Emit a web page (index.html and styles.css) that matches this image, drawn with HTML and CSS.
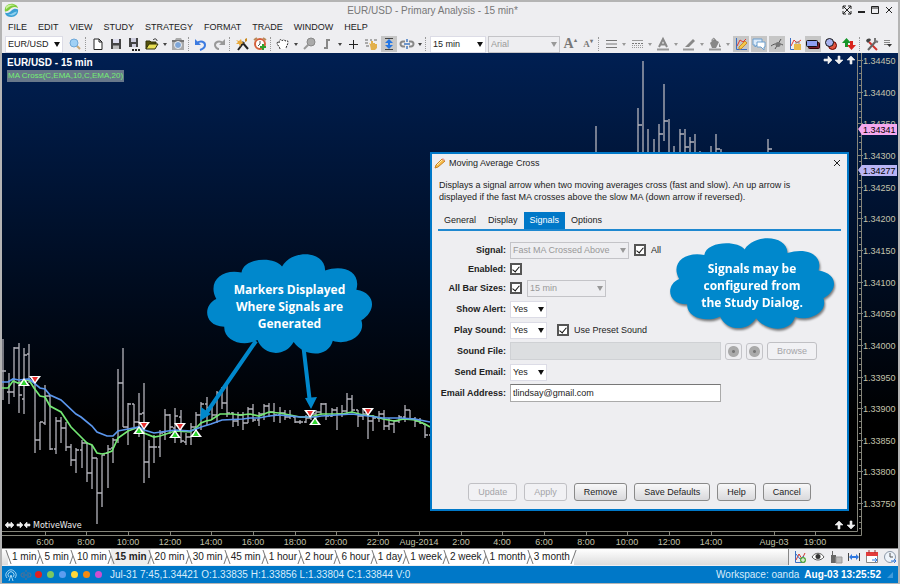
FILE: index.html
```html
<!DOCTYPE html>
<html lang="en">

<head>
    <meta charset="UTF-8">
    <meta name="viewport" content="width=device-width, initial-scale=1.0">
    <title>EUR/USD - Primary Analysis - 15 min*</title>
    <link rel="stylesheet" href="styles.css">
</head>

<body>
    <div class="window">
        <header class="titlebar">
            <svg class="logo" viewBox="0 0 16 16">
                <path d="M1 9C0 3 5 0 10 1c3 .6 4.500 2.500 5 4.500C11 3 8 5 6 7 4.500 8.500 2.500 9.500 1 9z" fill="#7ccb3a" />
                <path d="M2 4C5 1 9 1 12 3 8 2 5 4 2 7z" fill="#c9f09a" />
                <path d="M1 10c3 1.500 5 0 7-2s4.500-2.500 7-1c.5 5-3 8-7 8-4 0-6.500-2-7-5z" fill="#3ba0d4" />
                <path d="M4 12c4 1 6-3 10-3-2 4-6 5.500-10 3z" fill="#8fd0ee" />
            </svg>
            <h1>EUR/USD - Primary Analysis - 15 min*</h1>
            <div class="window-buttons">
                <button type="button" aria-label="Full screen"><svg viewBox="0 0 10 10"><path d="M1 4V1h3M6 1h3v3M9 6v3H6M4 9H1V6M1 1l8 8M9 1L1 9" /></svg></button>
                <button type="button" aria-label="Minimize"><svg viewBox="0 0 10 10"><path d="M2 7h7" stroke-width="2" /></svg></button>
                <button type="button" aria-label="Maximize"><svg viewBox="0 0 10 10"><path d="M1.500 1.500h7v7h-7zM2 3h6" /></svg></button>
                <button type="button" aria-label="Close"><svg viewBox="0 0 10 10"><path d="M2 2l6 6M8 2L2 8" /></svg></button>
            </div>
        </header>

        <nav class="menu">
            <a href="#">FILE</a>
            <a href="#">EDIT</a>
            <a href="#">VIEW</a>
            <a href="#">STUDY</a>
            <a href="#">STRATEGY</a>
            <a href="#">FORMAT</a>
            <a href="#">TRADE</a>
            <a href="#">WINDOW</a>
            <a href="#">HELP</a>
        </nav>

        <div class="toolbar">
            <span class="select symbol"><select aria-label="Symbol"><option>EUR/USD</option></select></span>
            <button type="button" aria-label="Find"><svg viewBox="0 0 16 16"><path d="M9 9l4 4" stroke="#c9a877" stroke-width="2" /><circle cx="7" cy="7" r="4" fill="#9fd0f5" stroke="#6fa8d8" /></svg></button>
            <span class="sep"></span>
            <button type="button" aria-label="New"><svg viewBox="0 0 16 16"><path d="M4 3h5l3 3v7.500H4z M9 3v3h3" fill="#fff" stroke="#222" /></svg></button>
            <button type="button" aria-label="Save"><svg viewBox="0 0 16 16"><path d="M3 3h10v10H3z" fill="#444" /><path d="M5 3h6v4H5z" fill="#dde" /><path d="M5 9.500h6V13H5z" fill="#bbb" /></svg></button>
            <button type="button" aria-label="Save as"><svg viewBox="0 0 16 16"><path d="M3 2h9v9H3z" fill="#444" /><path d="M5 2h5v4H5zM6 8h4v3H6z" fill="#ccd" /><path d="M6 13h2v2H6zM9 13h2v2H9zM12 13h2v2h-2z" fill="#222" /></svg></button>
            <button type="button" aria-label="Open"><svg viewBox="0 0 16 16"><path d="M2 13V5h4l1 1h5v2" fill="#55520c" stroke="#33330a" /><path d="M2 13l3-5h9l-3 5z" fill="#e8df55" stroke="#33330a" /><path d="M9 4c2-2 4-1 4 1" fill="none" stroke="#222" /></svg></button>
            <button type="button" class="caret" aria-label="Recent files"></button>
            <button type="button" aria-label="Snapshot"><svg viewBox="0 0 16 16"><path d="M2 4h3l1-2h5l1 2h2v10H2z" fill="#a9a9a9" /><path d="M2 4h12v2H2z" fill="#777" /><circle cx="8" cy="9" r="3.500" fill="#7ea6d8" stroke="#eee" /></svg></button>
            <span class="sep"></span>
            <button type="button" aria-label="Undo"><svg viewBox="0 0 16 16"><path d="M4 7c4-3 8-1 8 2 0 2-2 4-5 5" fill="none" stroke="#3c7be0" stroke-width="2" /><path d="M2 3v6h6z" fill="#3c7be0" /></svg></button>
            <button type="button" aria-label="Redo"><svg viewBox="0 0 16 16"><path d="M12 7C8 4 4 6 4 9c0 2 2 4 4 4" fill="none" stroke="#999" stroke-width="2" /><path d="M14 3v6H8z" fill="#999" /></svg></button>
            <span class="sep"></span>
            <button type="button" aria-label="Study wizard"><svg viewBox="0 0 16 16"><path d="M4 14l6-8M8 6l6 7" stroke="#222" stroke-width="2" /><path d="M2 4l3 1 2-2 1 3 2 1-3 1-1 3-1-3-3 0 2-2z" fill="#e8a93c" /><path d="M11 3l2-1v3l-2 1z" fill="#c98a20" /></svg></button>
            <button type="button" aria-label="Alerts"><svg viewBox="0 0 16 16"><circle cx="8" cy="8" r="5" fill="#fff" stroke="#d5603c" stroke-width="2" /><path d="M2 4l3-2M14 4l-3-2" stroke="#b98b5a" stroke-width="2" /><path d="M8 5v3l-2 2" fill="none" stroke="#555" /><path d="M11 8v6M8 11h6" stroke="#2ea12e" stroke-width="2" /></svg></button>
            <span class="sep"></span>
            <button type="button" aria-label="Pan"><svg viewBox="0 0 16 16"><path d="M5 13c0-2-3-4-3-6 0-1 2-1 2 0 0-4 2-4 3-2 1-2 3-1 3 0 2-1 3 0 3 1 0 3-2 4-2 7" fill="#fff" stroke="#222" stroke-dasharray="2 1" /></svg></button>
            <button type="button" class="caret" aria-label="Pan options"></button>
            <button type="button" aria-label="Zoom"><svg viewBox="0 0 16 16"><circle cx="10" cy="6" r="4" fill="#aaa" stroke="#888" /><path d="M7 9l-4 4" stroke="#999" stroke-width="2" /></svg></button>
            <button type="button" aria-label="Bar style"><svg viewBox="0 0 16 16"><path d="M8 3v10M8 4h3M5 12h3" stroke="#888" stroke-width="2" /></svg></button>
            <button type="button" class="caret" aria-label="Bar styles"></button>
            <button type="button" aria-label="Crosshair"><svg viewBox="0 0 16 16"><path d="M8.500 4v9M4 8.500h9" stroke="#222" /></svg></button>
            <button type="button" aria-label="Lock"><svg viewBox="0 0 16 16"><path d="M2 4h3M7 4h2M11 4h3M2 7h3M3 10h3" stroke="#aaa" stroke-width="2" /><path d="M7 9l-1-2 2 1V5h2v2h2v1h2v4l-2 2H8z" fill="#e2b04c" /></svg></button>
            <button type="button" class="on" aria-label="Fit vertical"><svg viewBox="0 0 16 16"><path d="M4 2.500h8M4 13.500h8" stroke="#444" /><path d="M8 3l4 4H9v2h3l-4 4-4-4h3V7H4z" fill="#2376e5" /></svg></button>
            <button type="button" aria-label="Link"><svg viewBox="0 0 16 16"><path d="M6 5.500H4a2.500 2.500 0 0 0 0 5h2M10 5.500h2a2.500 2.500 0 0 1 0 5h-2" fill="none" stroke="#888" stroke-width="2" /><path d="M5 8h6M8 3v3M8 10v3" stroke="#6d96cc" stroke-width="2" /></svg></button>
            <button type="button" class="caret" aria-label="Link options"></button>
            <span class="sep"></span>
            <span class="select barsize"><select aria-label="Bar size"><option>15 min</option></select></span>
            <span class="select font"><select aria-label="Font" disabled><option>Arial</option></select></span>
            <button type="button" aria-label="Larger text" class="letter large">A<sup>&#9652;</sup></button>
            <button type="button" aria-label="Smaller text" class="letter small">A<sup>&#9662;</sup></button>
            <span class="sep"></span>
            <button type="button" aria-label="Line width"><svg viewBox="0 0 16 16"><path d="M3 4.500h11M3 8h11M3 11.500h11" stroke="#777" /></svg></button>
            <button type="button" class="caret pale" aria-label="Line widths"></button>
            <button type="button" aria-label="Line style"><svg viewBox="0 0 16 16"><path d="M3 4.500h11" stroke="#999" /><path d="M3 7.500h11" stroke="#777" stroke-dasharray="2 1" /><path d="M3 9.500h11M3 11.500h11" stroke="#999" stroke-dasharray="1 1" /></svg></button>
            <button type="button" class="caret pale" aria-label="Line styles"></button>
            <button type="button" aria-label="Text color"><svg viewBox="0 0 16 16"><path d="M4 11l4-8 4 8M6 8.500h4" fill="none" stroke="#888" stroke-width="2" /><path d="M2 13.500h12" stroke="#999" stroke-width="2" /></svg></button>
            <button type="button" class="caret pale" aria-label="Text colors"></button>
            <button type="button" aria-label="Line color"><svg viewBox="0 0 16 16"><path d="M5 10l7-7 2 2-6 6H4z" fill="#888" /><path d="M2 13.500h11" stroke="#999" stroke-width="2" /></svg></button>
            <button type="button" class="caret pale" aria-label="Line colors"></button>
            <button type="button" aria-label="Fill color"><svg viewBox="0 0 16 16"><path d="M3 7l4-4 5 3-3 6H5zM12 7l2 4h-2z" fill="#888" /><path d="M5 5c0-4 4-3 3 0" fill="none" stroke="#777" /><path d="M2 13.500h12" stroke="#999" stroke-width="2" /></svg></button>
            <button type="button" class="caret pale" aria-label="Fill colors"></button>
            <button type="button" class="on" aria-label="Draw on chart"><svg viewBox="0 0 16 16"><path d="M3.500 2v11.500H14" fill="none" stroke="#3a6fc4" /><path d="M4 10l3-6 3 2 3-3" fill="none" stroke="#e23c32" /><path d="M6 11l6-6 2 2-6 6H6z" fill="#f4c84a" stroke="#c98d2d" /></svg></button>
            <button type="button" class="on" aria-label="Comments"><svg viewBox="0 0 16 16"><path d="M2 3h9v6H6l-2 2V9H2z" fill="#dcebfa" stroke="#6d9fce" /><path d="M6 6h8v5h-1v3l-3-3H6z" fill="#fff" stroke="#6d9fce" /></svg></button>
            <button type="button" class="on" aria-label="Hide studies"><svg viewBox="0 0 16 16"><path d="M2 10c4-3 8-3 12-1M6 13l6-10" fill="none" stroke="#555" /><circle cx="9" cy="8.500" r="2.500" fill="#777" /></svg></button>
            <button type="button" aria-label="Lock chart"><svg viewBox="0 0 16 16"><path d="M3.500 2v11.500H14" fill="none" stroke="#3a6fc4" /><path d="M4 10l3-6 3 3 4-3" fill="none" stroke="#e23c32" /><path d="M7 8h7v6H7z" fill="#e8b94a" /><path d="M9 8V6h3v2" fill="none" stroke="#888" /></svg></button>
            <button type="button" class="on" aria-label="Rectangle"><svg viewBox="0 0 16 16"><rect x="3.500" y="6.500" width="11" height="6" rx="1" fill="#7a1e2c" stroke="#300" /><rect x="1.500" y="4.500" width="11" height="6" rx="1" fill="#8d9ff0" stroke="#111" /></svg></button>
            <button type="button" aria-label="Ellipse"><svg viewBox="0 0 16 16"><circle cx="9.500" cy="9.500" r="4" fill="#e0533f" stroke="#600" /><circle cx="6.500" cy="6.500" r="4" fill="#a9b4f0" stroke="#111" /></svg></button>
            <button type="button" aria-label="Buy and sell"><svg viewBox="0 0 16 16"><path d="M5.500 2L10 7H7v4H4V7H1z" fill="#15962a" /><path d="M10.500 14L6 9h3V5h3v4h3z" fill="#d8231c" /></svg></button>
            <span class="sep"></span>
            <button type="button" aria-label="Preferences"><svg viewBox="0 0 16 16"><path d="M5 6l8 8" stroke="#d0342c" stroke-width="2" /><path d="M12 5l-8 9" stroke="#666" stroke-width="2" /><path d="M2 5c1-3 4-3 5-1L4 7z" fill="#444" /><path d="M11 2v3l3 1" fill="none" stroke="#777" stroke-width="2" /></svg></button>
            <button type="button" aria-label="More"><svg viewBox="0 0 16 16"><path d="M2 4.500h6M2 6.500h6M2 8.500h4" stroke="#888" /><path d="M5 8h5l-2.500 3z" fill="#333" /></svg></button>
        </div>

        <main class="chart">
            <svg class="plot" id="plot"></svg>

            <div class="chart-title">
                <h2>EUR/USD - 15 min</h2>
                <span class="study">MA Cross(C,EMA,10,C,EMA,20)</span>
            </div>

            <section class="dialog" role="dialog" aria-labelledby="dialog-title">
                <div class="dialog-head">
                    <svg viewBox="0 0 12 12"><path d="M1 11l1-3 6-6 3 2-7 6z" fill="#f6bd4c" stroke="#c98021" /><path d="M8 2l1-1 2 2-1 1z" fill="#e9a0a0" /><path d="M3 8l5-5" stroke="#fff0b8" /></svg>
                    <h2 id="dialog-title">Moving Average Cross</h2>
                    <button type="button" class="close" aria-label="Close"><svg viewBox="0 0 10 10"><path d="M2 2l6 6M8 2L2 8" /></svg></button>
                </div>
                <p class="description">Displays a signal arrow when two moving averages cross (fast and slow). An up arrow is displayed if the fast MA crosses above the slow MA (down arrow if reversed).</p>
                <div class="dialog-tabs">
                    <a href="#">General</a>
                    <a href="#">Display</a>
                    <a href="#" class="active">Signals</a>
                    <a href="#">Options</a>
                </div>
                <form class="signal-form">
                    <label for="signal">Signal:</label>
                    <div class="field">
                        <span class="select wide"><select id="signal" disabled><option>Fast MA Crossed Above</option></select></span>
                        <input type="checkbox" id="all" checked>
                        <label for="all">All</label>
                    </div>
                    <label for="enabled">Enabled:</label>
                    <div class="field"><input type="checkbox" id="enabled" checked></div>
                    <label for="sizes">All Bar Sizes:</label>
                    <div class="field">
                        <input type="checkbox" id="sizes" checked>
                        <span class="select medium"><select aria-label="Bar size" disabled><option>15 min</option></select></span>
                    </div>
                    <label for="alert">Show Alert:</label>
                    <div class="field"><span class="select yes"><select id="alert"><option>Yes</option><option>No</option></select></span></div>
                    <label for="sound">Play Sound:</label>
                    <div class="field">
                        <span class="select yes"><select id="sound"><option>Yes</option><option>No</option></select></span>
                        <input type="checkbox" id="preset" class="preset" checked>
                        <label for="preset">Use Preset Sound</label>
                    </div>
                    <label for="file">Sound File:</label>
                    <div class="field file">
                        <input type="text" id="file" disabled>
                        <button type="button" class="round" aria-label="Play" disabled></button>
                        <button type="button" class="round" aria-label="Stop" disabled></button>
                        <button type="button" class="btn" disabled>Browse</button>
                    </div>
                    <label for="send">Send Email:</label>
                    <div class="field"><span class="select yes"><select id="send"><option>Yes</option><option>No</option></select></span></div>
                    <label for="email">Email Address:</label>
                    <div class="field"><input type="text" id="email" value="tlindsay@gmail.com"></div>
                </form>
                <div class="dialog-buttons">
                    <button type="button" class="btn" disabled>Update</button>
                    <button type="button" class="btn" disabled>Apply</button>
                    <button type="button" class="btn">Remove</button>
                    <button type="button" class="btn">Save Defaults</button>
                    <button type="button" class="btn">Help</button>
                    <button type="button" class="btn">Cancel</button>
                </div>
            </section>

            <!-- callouts -->
            <div class="callout markers">
                <svg viewBox="20 42 497 305" preserveAspectRatio="none"><path d="M124 98C130 52 225 48 246 80C275 28 375 30 376 92C430 72 485 95 470 150C530 160 530 215 485 242C500 290 440 320 399 304C385 355 315 355 281 308C255 355 190 350 172 302C130 325 70 305 72 262C8 260 8 195 48 178C20 125 65 85 124 98Z" /></svg>
                <p>Markers Displayed<br>Where Signals are<br>Generated</p>
            </div>
            <div class="callout study-dialog">
                <svg viewBox="20 42 497 305" preserveAspectRatio="none"><path d="M124 98C130 52 225 48 246 80C275 28 375 30 376 92C430 72 485 95 470 150C530 160 530 215 485 242C500 290 440 320 399 304C385 355 315 355 281 308C255 355 190 350 172 302C130 325 70 305 72 262C8 260 8 195 48 178C20 125 65 85 124 98Z" /></svg>
                <p>Signals may be<br>configured from<br>the Study Dialog.</p>
            </div>
        </main>

        <div class="bar-tabs">
            <div class="tabs">
                <a href="#">1 min</a>
                <a href="#">5 min</a>
                <a href="#">10 min</a>
                <a href="#" class="active">15 min</a>
                <a href="#">20 min</a>
                <a href="#">30 min</a>
                <a href="#">45 min</a>
                <a href="#">1 hour</a>
                <a href="#">2 hour</a>
                <a href="#">6 hour</a>
                <a href="#">1 day</a>
                <a href="#">1 week</a>
                <a href="#">2 week</a>
                <a href="#">1 month</a>
                <a href="#">3 month</a>
            </div>
            <div class="tab-icons">
                <button type="button" aria-label="Add study"><svg viewBox="0 0 16 16"><path d="M3.500 2v11.500h9" fill="none" stroke="#3a6fc4" /><path d="M4 11l3-6 3 5 3-6" fill="none" stroke="#d8342c" /><path d="M4 5l4 5 4-3" fill="none" stroke="#3a6fc4" /><circle cx="11" cy="11" r="3" fill="#55a83a" /><path d="M11 9v4M9 11h4" stroke="#fff" /></svg></button>
                <button type="button" aria-label="View"><svg viewBox="0 0 16 16"><path d="M2 8c3-5 9-5 12 0-3 4-9 4-12 0z" fill="#fff" stroke="#555" /><circle cx="8" cy="7.500" r="2.500" fill="#333" /></svg></button>
                <button type="button" aria-label="Trade panel"><svg viewBox="0 0 16 16"><path d="M3 6h5v8H3zM4 2h1v4H4z" fill="#666" /><path d="M8 8h6v6H8z" fill="#bbb" stroke="#999" /></svg></button>
                <button type="button" aria-label="Fit width"><svg viewBox="0 0 16 16"><path d="M2.500 4v8M13.500 4v8" stroke="#444" /><path d="M3 8l3-3v2h4V5l3 3-3 3V9H6v2z" fill="#2f78e0" /></svg></button>
                <button type="button" aria-label="Calendar"><svg viewBox="0 0 16 16"><path d="M2.500 3.500h11v10h-11z" fill="#fff" stroke="#888" /><path d="M2 3h12v4H2z" fill="#e23c3c" /><path d="M5 1v3M11 1v3" stroke="#933" /><path d="M8 11h5M11 9l2 2-2 2" fill="none" stroke="#2f78e0" /></svg></button>
                <button type="button" aria-label="Clock"><svg viewBox="0 0 16 16"><circle cx="8" cy="8" r="5.500" fill="#eef4fb" stroke="#8b98a8" /><path d="M8 4v4h3" fill="none" stroke="#555" /><path d="M9 12h5M12 10l2 2-2 2" fill="none" stroke="#2f78e0" /></svg></button>
            </div>
        </div>

        <footer class="status">
            <div class="lights">
                <svg viewBox="0 0 12 12"><path d="M2 9a5 5 0 1 1 8 0M4 8a3 3 0 1 1 4 0M4 12l2-6 2 6" fill="none" stroke="#a8d8f4" /></svg>
                <svg viewBox="0 0 12 12"><path d="M5 4H3a2 2 0 0 0 0 4h2M7 4h2a2 2 0 0 1 0 4H7M3 6h6M6 1v2M6 9v2" fill="none" stroke="#5d6f8c" /></svg>
            </div>
            <span class="dot red"></span>
            <span class="dot green"></span>
            <span class="dot blue"></span>
            <span class="dot yellow"></span>
            <span class="dot orange"></span>
            <span class="dot purple"></span>
            <span class="quote">Jul-31 7:45,1.34421 O:1.33835 H:1.33856 L:1.33804 C:1.33844 V:0</span>
            <span class="workspace">Workspace: oanda</span>
            <strong>Aug-03 13:25:52</strong>
            <svg class="grip" viewBox="0 0 8 8"><path d="M7 1v6H1z" fill="#3f9bdb" /></svg>
        </footer>
    </div>
    <script src="chart.js"></script>
</body>

</html>
```

FILE: styles.css
```css
* {
    box-sizing: border-box;
}

body {
    margin: 0;
    font-family: "Liberation Sans", Arial, sans-serif;
    font-size: 10px;
    color: #222;
}

h1,
h2,
p {
    margin: 0;
    font-weight: normal;
}

a {
    color: inherit;
    text-decoration: none;
}

button,
select,
input {
    margin: 0;
    font-family: inherit;
    font-size: 9px;
    color: inherit;
}

.window {
    display: flex;
    flex-direction: column;
    height: 100vh;
    min-height: 560px;
    background: #eeeef1;
    border: 2px solid #b4b4b4;
    border-bottom-width: 1px;
}

/* title and menu */
.titlebar {
    display: flex;
    align-items: center;
    height: 16px;
    padding: 0 4px 0 2px;
}

.logo {
    width: 15px;
    height: 15px;
}

.titlebar h1 {
    flex: 1;
    padding-left: 4px;
    text-align: center;
    font-size: 10px;
    color: #777;
}

.window-buttons {
    display: flex;
    gap: 4px;
}

.window-buttons button,
.close {
    width: 10px;
    height: 10px;
    padding: 0;
    border: 0;
    background: none;
}

.window-buttons svg,
.close svg {
    display: block;
    fill: none;
    stroke: #222;
}

.menu {
    display: flex;
    align-items: center;
    gap: 11px;
    height: 17px;
    padding-left: 6px;
    font-size: 9px;
}

/* toolbar */
.toolbar {
    display: flex;
    align-items: center;
    gap: 2px;
    height: 18px;
    padding: 0 3px;
}

.toolbar button,
.tab-icons button {
    flex: none;
    width: 16px;
    height: 16px;
    padding: 0;
    border: 0;
    background: none;
}

.toolbar button svg,
.tab-icons svg {
    display: block;
    width: 16px;
    height: 16px;
}

.toolbar button.on {
    background: #c6c6c6;
}

.toolbar .sep {
    flex: none;
    width: 3px;
    height: 14px;
    border-left: 1px dotted #999;
}

.toolbar button.caret {
    width: 6px;
}

.caret::before {
    content: "";
    display: block;
    border: 2px solid transparent;
    border-top: 3px solid #444;
    border-bottom: 0;
    width: 0;
    margin-left: 1px;
}

.caret.pale::before {
    border-top-color: #999;
}

.toolbar .letter {
    font-family: "Liberation Serif", serif;
    font-weight: bold;
    line-height: 16px;
    color: #777;
    white-space: nowrap;
}

.toolbar .large {
    font-size: 14px;
}

.toolbar .small {
    font-size: 9px;
}

.letter sup {
    font-size: 6px;
    line-height: 0;
}

/* drop-downs */
.select {
    position: relative;
    flex: none;
    display: block;
    height: 17px;
}

.select select {
    display: block;
    width: 100%;
    height: 100%;
    padding: 0 0 0 2px;
    border: 1px solid #dcdce6;
    border-radius: 0;
    background: #fff;
    appearance: none;
}

.select::after {
    content: "";
    position: absolute;
    top: 6px;
    right: 3px;
    border: 3px solid transparent;
    border-top: 5px solid #111;
    border-bottom: 0;
    pointer-events: none;
}

.select select:disabled {
    opacity: 1;
    color: #999;
    background: #eeeef1;
    border-color: #c4c4c8;
}

.select:has(:disabled)::after {
    border-top-color: #999;
}

.symbol {
    width: 58px;
    margin-right: 2px;
}

.barsize {
    width: 56px;
}

.font {
    width: 72px;
}

.wide {
    width: 119px;
}

.medium {
    width: 79px;
}

.yes {
    width: 37px;
}

/* chart */
.chart {
    position: relative;
    flex: 1;
    min-height: 0;
    overflow: hidden;
    background: linear-gradient(#001f52, #000 75%);
}

.plot {
    position: absolute;
    inset: 0;
    width: 100%;
    height: 100%;
}

.plot text {
    font-size: 9px;
    fill: #c3c3ab;
}

.plot .tag {
    fill: #000;
}

.plot .brand {
    font-family: "DejaVu Sans", sans-serif;
    font-size: 8px;
    fill: #eee;
}

.chart-title {
    position: relative;
    padding: 3px 5px;
}

.chart-title h2 {
    font-size: 10px;
    line-height: 13px;
    font-weight: bold;
    color: #fff;
}

.study {
    display: inline-block;
    padding: 0 1px;
    font-size: 8px;
    line-height: 12px;
    background: #68788a;
    color: #74ee74;
}

/* study dialog */
.dialog {
    position: absolute;
    top: 99px;
    left: 428px;
    width: 419px;
    display: flex;
    flex-direction: column;
    height: 359px;
    padding: 0 6px 8px;
    border: 2px solid #0078c8;
    background: #eeeef1;
    font-size: 9px;
}

.dialog-head {
    display: flex;
    align-items: center;
    gap: 3px;
    height: 18px;
    margin: 0 -1px 0 -4px;
}

.dialog-head > svg {
    width: 12px;
    height: 12px;
}

.dialog-head h2 {
    flex: 1;
    font-size: 9px;
}

.description {
    padding: 7px 32px 0 1px;
    line-height: 12px;
}

.dialog-tabs {
    display: flex;
    margin-top: 9px;
    border-bottom: 2px solid #1f88d0;
}

.dialog-tabs a {
    padding: 0 6px;
    line-height: 17px;
}

.dialog-tabs .active {
    background: #0078c8;
    color: #fff;
}

.signal-form {
    display: grid;
    grid-template-columns: 68px 1fr;
    column-gap: 4px;
    row-gap: 3px;
    align-items: center;
    margin-top: 10px;
}

.signal-form > label {
    text-align: right;
    font-weight: bold;
    white-space: nowrap;
}

.field {
    display: flex;
    align-items: center;
    gap: 5px;
    min-height: 14px;
}

.field:has(.select),
.field:has([type="text"]) {
    min-height: 18px;
}

.field input[type="checkbox"] {
    position: relative;
    width: 12px;
    height: 12px;
    border: 2px solid #555;
    background: #fff;
    appearance: none;
}

.field input[type="checkbox"]:checked::before {
    content: "";
    position: absolute;
    left: 2px;
    top: 0;
    width: 3px;
    height: 6px;
    border: solid #111;
    border-width: 0 1px 1px 0;
    transform: rotate(40deg);
}

.field .preset {
    margin-left: 5px;
}

.field input[type="text"] {
    width: 211px;
    height: 18px;
    padding: 0 2px;
    border: 1px solid #aaa;
    border-top-color: #777;
    background: #fff;
}

.field input[type="text"]:disabled {
    border-color: #cfd1d4;
    background: #dcdee0;
}

.field.file {
    gap: 4px;
}

.round {
    width: 17px;
    height: 17px;
    padding: 0;
    border: 1px solid #c4c4c8;
    border-radius: 3px;
    background: radial-gradient(circle, #777 1px, #aaa 2px, #aaa 5px, #eeeef1 6px);
}

.btn {
    height: 18px;
    padding: 0 9px;
    border: 1px solid #8a8a8a;
    border-radius: 3px;
    background: linear-gradient(#f8f8f9, #d9d9dc);
    line-height: 14px;
    white-space: nowrap;
}

.btn:disabled {
    border-color: #c0c0c4;
    background: #f1f1f4;
    color: #a4a4a8;
}

.dialog-buttons {
    display: flex;
    justify-content: center;
    gap: 7px;
    margin-top: auto;
}

/* cloud callouts drawn over the chart */
.callout {
    position: absolute;
    display: flex;
    align-items: center;
    justify-content: center;
}

.callout svg {
    position: absolute;
    inset: 0;
    width: 100%;
    height: 100%;
    fill: #0088cc;
    overflow: visible;
}

.callout p {
    position: relative;
    padding-top: 3px;
    text-align: center;
    font-family: "Open Sans", sans-serif;
    font-size: 12px;
    line-height: 17px;
    font-weight: bold;
    color: #fff;
}

.markers {
    top: 201px;
    left: 205px;
    width: 165px;
    height: 101px;
}

.study-dialog {
    top: 185px;
    left: 668px;
    width: 164px;
    height: 92px;
    filter: drop-shadow(1px 2px 1px #777);
}

/* bar size tabs */
.bar-tabs {
    display: flex;
    height: 18px;
    border-top: 1px solid #888;
}

.tabs {
    display: flex;
    flex: 1;
    padding-left: 6px;
    border-right: 1px solid #888;
    margin-bottom: 1px;
    background: linear-gradient(#fff, #ddd);
}

.tabs a {
    position: relative;
    padding: 0 4px;
    line-height: 15px;
    white-space: nowrap;
    background: #fff;
}

.tabs a::before,
.tabs a::after {
    content: "";
    position: absolute;
    top: 1px;
    bottom: 1px;
    right: 0;
    border-right: 1px solid #777;
    transform: skewX(-20deg);
}

.tabs a::before {
    left: 0;
    right: auto;
    transform: skewX(20deg);
}

.tabs .active {
    font-weight: bold;
    background: #eee;
}

.tab-icons {
    display: flex;
    gap: 2px;
    padding: 0 0 0 3px;
}

/* status bar */
.status {
    display: flex;
    align-items: center;
    gap: 5px;
    height: 17px;
    padding: 0 4px 0 3px;
    background: #0078c8;
    color: #d8ecfa;
    white-space: nowrap;
}

.lights {
    display: flex;
    gap: 3px;
    margin-right: -2px;
}

.lights svg {
    width: 12px;
    height: 12px;
}

.dot {
    width: 7px;
    height: 7px;
    border-radius: 50%;
}

.red {
    background: #e02020;
}

.green {
    background: #7cc860;
}

.blue {
    background: #5c9df0;
}

.yellow {
    background: #ffd83a;
}

.orange {
    background: #f48a10;
}

.purple {
    background: #cc4fd0;
}

.quote {
    flex: 1;
    padding-left: 3px;
}

.status strong {
    color: #fff;
}

.grip {
    width: 8px;
    height: 8px;
}
```

FILE: chart.js
```js
const plot = document.getElementById('plot');
const BAR_STEP = 5.21;

// high, low, open, close of every bar, as heights in the plot
const bars = [
    [286, 347, 318, 318], [320, 351, 339, 339], [294, 344, 339, 295], [290, 360, 295, 342], [295, 361, 346, 302],
    [291, 330, 301, 328], [327, 400, 328, 387], [369, 397, 387, 369], [332, 372, 370, 343], [342, 397, 343, 396],
    [364, 401, 396, 368], [364, 390, 368, 375], [369, 398, 375, 394], [391, 413, 394, 407], [395, 420, 407, 397],
    [387, 415, 397, 390], [389, 429, 390, 420], [392, 436, 420, 405], [405, 471, 405, 440], [402, 454, 440, 402],
    [392, 435, 400, 396], [385, 410, 395, 387], [316, 390, 387, 330], [295, 374, 330, 374], [350, 392, 374, 351],
    [351, 374, 351, 369], [340, 384, 369, 361], [330, 430, 360, 409], [387, 425, 409, 394], [382, 410, 394, 394],
    [377, 404, 394, 380], [356, 387, 379, 362], [361, 381, 362, 374], [355, 390, 375, 363], [357, 390, 364, 388],
    [380, 392, 389, 384], [370, 392, 384, 374], [359, 380, 374, 362], [349, 377, 362, 351], [344, 372, 351, 355],
    [350, 367, 355, 362], [338, 370, 362, 340], [334, 356, 340, 350], [332, 364, 350, 360], [359, 374, 360, 368],
    [359, 373, 368, 362], [359, 377, 362, 370], [354, 370, 370, 356], [351, 369, 356, 367], [359, 373, 367, 361],
    [351, 367, 361, 353], [350, 364, 353, 359], [350, 369, 359, 362], [354, 370, 362, 360], [357, 367, 360, 364],
    [357, 366, 364, 363], [364, 370, 364, 369], [367, 371, 369, 369], [362, 370, 369, 365], [359, 367, 365, 361],
    [357, 370, 361, 359], [350, 362, 359, 351], [350, 367, 351, 363], [355, 364, 363, 357], [354, 377, 357, 361],
    [352, 364, 361, 358], [340, 362, 358, 346], [342, 359, 346, 357], [357, 374, 357, 363], [355, 367, 363, 361],
    [359, 386, 361, 368], [362, 378, 368, 365], [358, 369, 365, 361], [357, 377, 361, 373], [365, 377, 373, 371],
    [367, 380, 371, 368], [362, 370, 368, 364], [352, 369, 364, 357], [357, 367, 357, 366], [364, 374, 366, 368],
    [365, 371, 368, 370], [372, 385, 371, 382], [377, 385, 382, 384]
];

// x, high, low, close of the later bars, partly under the dialog
const laterBars = [
    [594, 73, 100], [636, 55, 100, 72], [641, 8, 100], [646, 76, 100], [652, 86, 100], [657, 71, 100, 81],
    [662, 31, 88, 68], [667, 66, 100], [672, 93, 100], [678, 76, 100, 81], [683, 76, 100, 94], [688, 84, 100, 89],
    [693, 81, 100], [698, 98, 100], [709, 93, 100], [714, 81, 100, 96], [719, 96, 100], [766, 86, 100, 96]
];

const fast = '0,335 6,335 11,328 16,330 27,327 32,335 38,343 43,344 48,353 59,359 69,374 79,384 85,390 90,392 95,400 100,401 105,400 110,398 116,385 126,378 137,374 142,380 152,384 158,383 173,378 188,379 194,375 199,370 204,368 209,367 218,361 220,361 230,361 238,362 248,361 257,363 267,359 277,360 288,362 298,364 308,364 319,361 340,361 350,359 361,362 371,363 381,366 392,368 402,366 413,367 423,371 428,374';
const slow = '0,329 6,329 11,326 17,327 27,326 32,330 38,335 43,336 48,342 59,347 74,361 79,364 90,373 95,379 105,383 111,383 116,378 126,376 137,374 142,377 152,380 173,377 189,378 194,376 199,374 209,371 220,367 241,366 248,365 257,365 267,363 277,362 298,364 314,364 319,363 335,362 350,361 366,363 381,365 398,365 413,366 428,369';

const up = [[22, 329], [137, 377], [173, 381], [194, 380], [313, 368]];
const down = [[33, 327], [142, 373], [178, 374], [308, 361], [366, 359]];

const times = [
    [43, '6:00'], [84, '8:00'], [126, '10:00'], [168, '12:00'], [209, '14:00'], [251, '16:00'], [293, '18:00'],
    [334, '20:00'], [376, '22:00'], [417, 'Aug-2014'], [459, '2:00'], [500, '4:00'], [542, '6:00'], [584, '8:00'],
    [625, '10:00'], [667, '12:00'], [709, '14:00'], [772, 'Aug-03'], [813, '19:00']
];

function barPaths() {
    let d = '';
    bars.forEach(([high, low, open, close], i) => {
        const x = Math.round(1.4 + i * BAR_STEP);
        d += `M${x} ${high}V${low}M${x - 2} ${open}h2M${x} ${close}h3`;
    });
    laterBars.forEach(([x, high, low, close]) => {
        d += `M${x} ${high}V${low}`;
        if (close) d += `M${x} ${close}h4`;
    });
    return `<path d="${d}" fill="none" stroke="#b4b4bc" stroke-width="1.3"/>`;
}

function arrow(x, y, angle, size = 4) {
    return `<path d="M0 -${size}L${size} 0H1V${size}H-1V0H-${size}Z" fill="#eee" stroke="#eee" stroke-width=".6" transform="translate(${x} ${y}) rotate(${angle})"/>`;
}

function drawChart() {
    const w = plot.clientWidth;
    const h = plot.clientHeight;
    const right = w - 38;
    const bottom = h - 13;
    let out = barPaths();

    out += `<polyline points="${fast}" fill="none" stroke="#74e874" stroke-width="1.7"/>`;
    out += `<polyline points="${slow}" fill="none" stroke="#5b97ee" stroke-width="1.7"/>`;
    up.forEach(([x, y]) => {
        out += `<path d="M${x} ${y - 4}l6 8h-12z" fill="#fff"/><path d="M${x} ${y - 2}l3 5h-6z" fill="#2fd52f"/>`;
    });
    down.forEach(([x, y]) => {
        out += `<path d="M${x} ${y + 4}l6 -8h-12z" fill="#fff"/><path d="M${x} ${y + 2}l3 -5h-6z" fill="#e83030"/>`;
    });

    // pointers of the cloud callout
    out += '<path d="M254 288L203 362M301 290L308 350" stroke="#0088cc" stroke-width="4"/>';
    out += '<path d="M198 368l1-14 10 7zM309 356l-6-11 12-1z" fill="#0088cc"/>';

    // price and time axis
    let axis = `M${right - 3}.5 0V${bottom - 4}.5H0M${right + 1}.5 0V${bottom}.5H0`;
    let labels = '';
    for (let i = 0; i < 15; i++) {
        const y = 7 + i * 31.65;
        axis += `M${right - 3} ${Math.round(y)}.5h6`;
        for (let k = 1; k < 5; k++) axis += `M${right - 1} ${Math.round(y + k * 6.33)}.5h3`;
        labels += `<text x="${right + 3}" y="${Math.round(y) + 4}">${(1.3445 - i * 0.0005).toFixed(5)}</text>`;
    }
    times.forEach(([x, label]) => {
        axis += `M${x}.5 ${bottom - 4}v4`;
        labels += `<text x="${x}" y="${h - 3}" text-anchor="middle">${label}</text>`;
    });
    out += `<path d="${axis}" fill="none" stroke="#85857a"/>${labels}`;

    [[76, '#f5a8ee', '1.34341'], [117, '#b9b4f5', '1.34277']].forEach(([y, color, price]) => {
        out += `<path d="M${right - 2} ${y}l4 -5h${w - right - 3}v11h-${w - right - 3}z" fill="${color}"/>`;
        out += `<text class="tag" x="${right + 3}" y="${y + 4}">${price}</text>`;
    });

    out += arrow(right - 32, 7, 90) + arrow(right - 21, 7, 180) + arrow(right - 9, 7, 0);
    out += arrow(right - 21, h - 23, 0) + arrow(right - 9, h - 23, 180);
    out += arrow(6, h - 23, 270, 3) + arrow(9, h - 23, 90, 3) + arrow(18, h - 23, 90, 3) + arrow(25, h - 23, 270, 3);
    out += `<text class="brand" x="31" y="${h - 20}">MotiveWave</text>`;
    plot.innerHTML = out;
}

drawChart();
window.addEventListener('resize', drawChart);
```
